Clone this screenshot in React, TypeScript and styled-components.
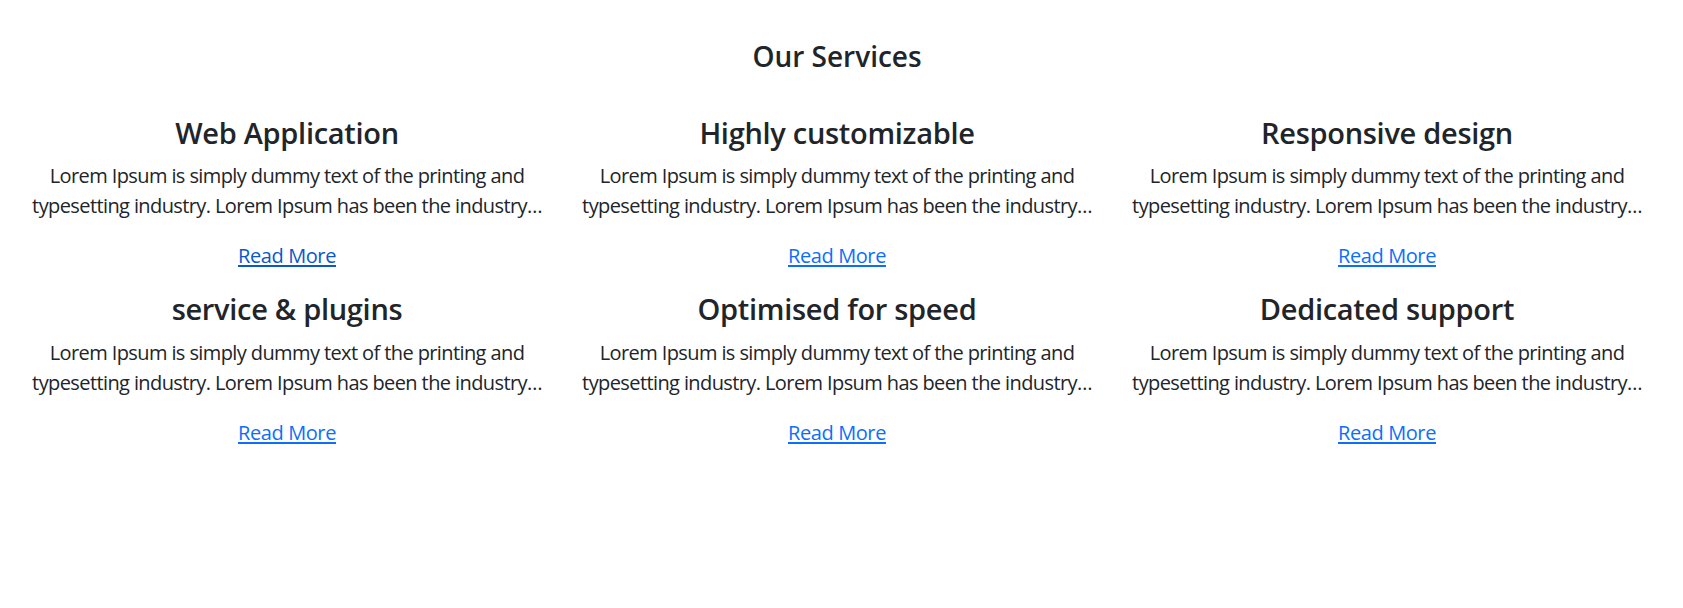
import styled, { createGlobalStyle } from "styled-components";

const GlobalStyle = createGlobalStyle`
  body {
    margin: 0;
    background: #fff;
    color: #212529;
    font-family: "Open Sans", "Noto Sans", sans-serif;
  }
`;

const Section = styled.section`
  padding: 40px 21px 0 12px;
`;

const Title = styled.h3`
  margin: 0 0 42px;
  font-size: 28px;
  font-weight: 600;
  line-height: 1.2;
  text-align: center;
`;

const Grid = styled.div`
  display: grid;
  grid-template-columns: repeat(3, 1fr);
  row-gap: 21px;
`;

const Card = styled.div`
  padding: 0 12px;
  text-align: center;
`;

const CardTitle = styled.h2`
  margin: 0 0 11px;
  font-size: 29px;
  font-weight: 600;
  line-height: 1.2;
  letter-spacing: -0.3px;
`;

const Excerpt = styled.p`
  margin: 0 0 20px;
  font-size: 20px;
  line-height: 30px;
  letter-spacing: -0.6px;
  display: -webkit-box;
  -webkit-line-clamp: 2;
  -webkit-box-orient: vertical;
  overflow: hidden;
`;

const More = styled.a<{ $hover?: boolean }>`
  display: inline-block;
  font-size: 20px;
  line-height: 30px;
  letter-spacing: -0.4px;
  color: ${(p) => (p.$hover ? "#0a58ca" : "#0d6efd")};
  text-decoration: underline;
  text-underline-offset: 2px;

  &:hover {
    color: #0a58ca;
  }
`;

const lorem =
  "Lorem Ipsum is simply dummy text of the printing and typesetting industry. Lorem Ipsum has been the industry…";

const services = [
  "Web Application",
  "Highly customizable",
  "Responsive design",
  "service & plugins",
  "Optimised for speed",
  "Dedicated support",
];

export default function App() {
  return (
    <>
      <GlobalStyle />
      <Section>
        <Title>Our Services</Title>
        <Grid>
          {services.map((name, i) => (
            <Card key={name}>
              <CardTitle>{name}</CardTitle>
              <Excerpt>{lorem}</Excerpt>
              <More href="#" $hover={i === 0}>
                Read More
              </More>
            </Card>
          ))}
        </Grid>
      </Section>
    </>
  );
}
